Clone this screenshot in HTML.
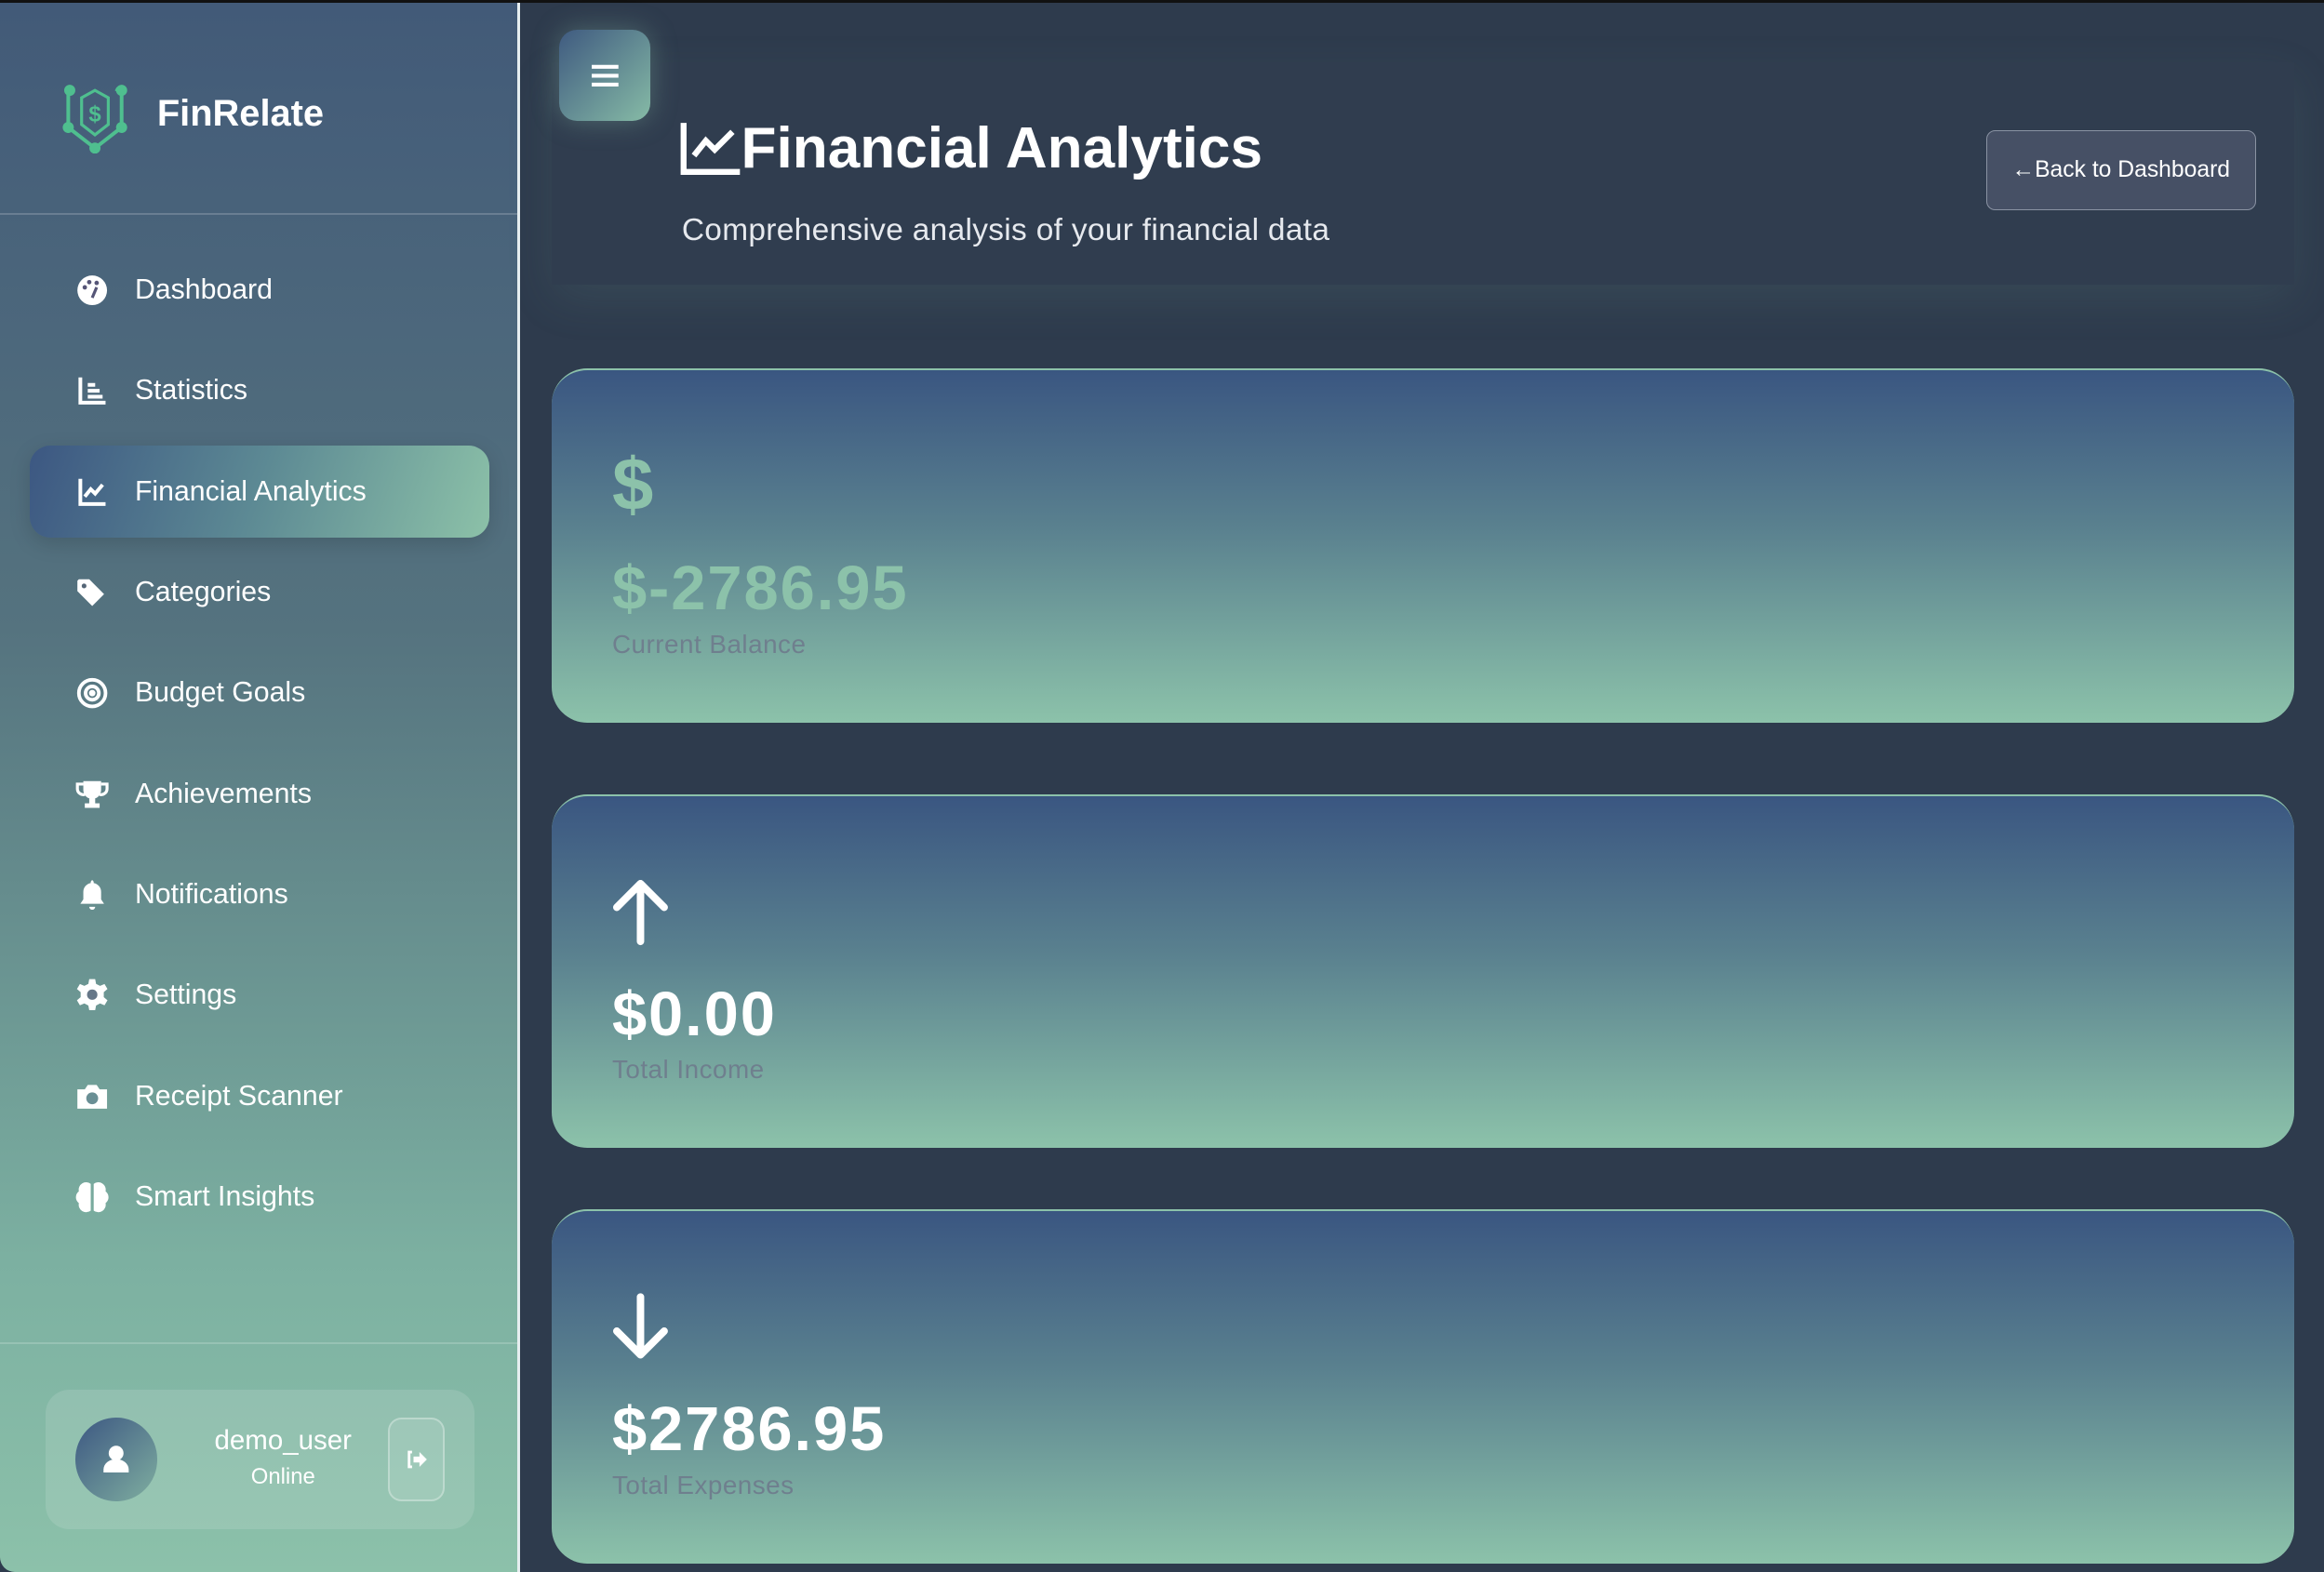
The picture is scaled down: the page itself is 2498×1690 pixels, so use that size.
<!DOCTYPE html>
<html><head><meta charset="utf-8"><style>
*{box-sizing:border-box;margin:0;padding:0}
html,body{width:2498px;height:1690px;overflow:hidden;background:#2d3a4c}
#w{zoom:1.5931;width:1568px;height:1061px;position:relative;font-family:"Liberation Sans",sans-serif;background:#2e3b4d;border-top:2px solid #111}
#sb{position:absolute;left:0;top:0;width:351px;height:1059px;background:linear-gradient(180deg,#425a78 0%,#55737f 40%,#7cb0a1 80%,#8cc1aa 100%);border-right:2px solid #e6eef0;border-bottom-left-radius:10px}
.logo{position:absolute;left:42px;top:52px}
.brand{position:absolute;left:106px;top:61px;color:#fff;font-size:25px;font-weight:bold}
.sep{position:absolute;left:0;width:349px;height:1px;background:rgba(255,255,255,.18)}
.ni{position:absolute;left:50px;color:#fff;font-size:19px;display:flex;align-items:center;height:30px}
.ni svg{width:24px;height:24px;margin-right:17px}
.act{position:absolute;left:20px;top:299px;width:310px;height:62px;border-radius:14px;background:linear-gradient(110deg,#3c5782 0%,#5d8a94 50%,#8cc1a8 100%);box-shadow:0 4px 14px rgba(0,0,0,.15)}
.user{position:absolute;left:31px;top:936px;width:289px;height:94px;border-radius:16px;background:rgba(255,255,255,.12)}
.av{position:absolute;left:20px;top:19px;width:55px;height:56px;border-radius:50%;background:linear-gradient(135deg,#3c5782,#7faea0)}
.hdr{position:absolute;left:372px;top:40px;width:1176px;height:150px;background:#303d4f;box-shadow:0 10px 30px rgba(120,170,160,.12)}
.ham{position:absolute;left:377px;top:18px;width:62px;height:62px;border-radius:12px;background:linear-gradient(135deg,#3f5a80,#86bba6);box-shadow:0 0 18px rgba(140,193,170,.35)}
.title{position:absolute;left:458px;top:76px;color:#fff;font-size:39px;font-weight:bold;display:flex;align-items:center}
.sub{position:absolute;left:460px;top:142px;color:#e6e9ee;font-size:21px;letter-spacing:.2px}
.back{position:absolute;left:1340px;top:86px;width:182px;height:54px;border:1px solid #8a93a3;border-radius:6px;background:#465065;color:#fff;font-size:15.5px;display:flex;align-items:center;justify-content:center}
.card{position:absolute;left:372px;width:1176px;height:239px;border-radius:24px;background:linear-gradient(180deg,#3a5681 0%,#5a818f 45%,#8cc2aa 100%);border-top:1.5px solid #8cc2aa}
.card .big{position:absolute;left:41px;font-size:42px;font-weight:bold;letter-spacing:1.2px}
.card .lbl{position:absolute;left:41px;font-size:17.5px;color:#6f7f8e;letter-spacing:.3px}
</style></head><body><div id="w">
<div id="sb">
<svg class="logo" width="46" height="50" viewBox="0 0 46 50" fill="none" stroke="#4fbf8f" stroke-width="2.5"><path d="M8 6 L4 8 V32 L22 46 L40 32 V8 L36 6"/><path d="M13 12 V30 L22 37 L31 30 V12 L22 7 Z" stroke-width="2"/><text x="22" y="28" fill="#4fbf8f" stroke="none" font-size="15" font-weight="bold" text-anchor="middle" font-family="Liberation Sans">$</text><circle cx="5" cy="7" r="2.5" fill="#4fbf8f"/><circle cx="40" cy="7" r="2.5" fill="#4fbf8f"/><circle cx="4" cy="32" r="2.5" fill="#4fbf8f"/><circle cx="40" cy="32" r="2.5" fill="#4fbf8f"/><circle cx="22" cy="46" r="2.5" fill="#4fbf8f"/></svg>
<div class="brand">FinRelate</div>
<div class="sep" style="top:142px"></div>
<div class="act"></div>
<div class="ni" style="top:179px"><svg viewBox="0 0 24 24"><circle cx="12" cy="12" r="10" fill="#fff"/><circle cx="7" cy="10" r="1.5" fill="#557"/><circle cx="10" cy="6.5" r="1.5" fill="#557"/><circle cx="15" cy="7" r="1.5" fill="#557"/><path d="M12 17 L15 10" stroke="#557" stroke-width="2"/></svg>Dashboard</div>
<div class="ni" style="top:247px"><svg viewBox="0 0 24 24" fill="none" stroke="#fff" stroke-width="2.5"><path d="M4 3V20H21M9 8H14M9 12H17M9 16H19"/></svg>Statistics</div>
<div class="ni" style="top:315px"><svg viewBox="0 0 24 24" fill="none" stroke="#fff" stroke-width="2.5"><path d="M4 3V20H21M7 15L11 10L14 13L19 7"/></svg>Financial Analytics</div>
<div class="ni" style="top:383px"><svg viewBox="0 0 24 24"><path d="M2 4V11L12 21L20 13L10 3H3Z" fill="#fff"/><circle cx="6.5" cy="7.5" r="1.6" fill="#567"/></svg>Categories</div>
<div class="ni" style="top:451px"><svg viewBox="0 0 24 24" fill="none" stroke="#fff" stroke-width="2.4"><circle cx="12" cy="12" r="9"/><circle cx="12" cy="12" r="4.5"/><circle cx="12" cy="12" r="1" fill="#fff"/></svg>Budget Goals</div>
<div class="ni" style="top:519px"><svg viewBox="0 0 24 24"><path d="M6 3H18V9A6 6 0 0 1 6 9Z M10 14H14V18H17V21H7V18H10Z" fill="#fff"/><path d="M6 5H2V8A4 4 0 0 0 7 12M18 5H22V8A4 4 0 0 1 17 12" stroke="#fff" stroke-width="2" fill="none"/></svg>Achievements</div>
<div class="ni" style="top:587px"><svg viewBox="0 0 24 24"><path d="M12 2A2 2 0 0 1 13 4A6 6 0 0 1 18 10V15L20 18H4L6 15V10A6 6 0 0 1 11 4A2 2 0 0 1 12 2ZM10 20H14A2 2 0 0 1 10 20Z" fill="#fff"/></svg>Notifications</div>
<div class="ni" style="top:655px"><svg viewBox="0 0 24 24"><path d="M10 1H14L14.6 4.2L17.3 5.6L20.3 4.3L22.3 7.7L19.8 9.8V13.2L22.3 15.3L20.3 18.7L17.3 17.4L14.6 18.8L14 22H10L9.4 18.8L6.7 17.4L3.7 18.7L1.7 15.3L4.2 13.2V9.8L1.7 7.7L3.7 4.3L6.7 5.6L9.4 4.2Z" fill="#fff"/><circle cx="12" cy="11.5" r="3.5" fill="#678"/></svg>Settings</div>
<div class="ni" style="top:723px"><svg viewBox="0 0 24 24"><path d="M2 7H7L9 4H15L17 7H22V20H2Z" fill="#fff"/><circle cx="12" cy="13" r="4" fill="#6a8f95"/></svg>Receipt Scanner</div>
<div class="ni" style="top:791px"><svg viewBox="0 0 24 24"><path d="M11 3A5 5 0 0 0 3 8A5 5 0 0 0 3 16A5 5 0 0 0 11 21ZM13 3A5 5 0 0 1 21 8A5 5 0 0 1 21 16A5 5 0 0 1 13 21Z" fill="#fff"/></svg>Smart Insights</div>
<div class="sep" style="top:904px"></div>
<div class="user"><div class="av"><svg width="55" height="56" viewBox="0 0 55 56"><circle cx="27.5" cy="24" r="5" fill="#fff"/><path d="M19 35A8.5 7 0 0 1 36 35V37H19Z" fill="#fff"/></svg></div>
<div style="position:absolute;left:100px;top:24px;width:120px;text-align:center;color:#fff;font-size:18.5px">demo_user</div>
<div style="position:absolute;left:110px;top:50px;width:100px;text-align:center;color:#fff;font-size:15px">Online</div>
<div style="position:absolute;left:231px;top:19px;width:38px;height:56px;border-radius:9px;border:1.5px solid rgba(255,255,255,.3);background:rgba(255,255,255,.1)"><svg width="38" height="56" viewBox="0 0 38 56"><path d="M15 22H13V32H15" stroke="#fff" stroke-width="1.8" fill="none"/><path d="M16 25H20V22L25 27L20 32V29H16Z" fill="#fff"/></svg></div></div>
</div>
<div class="hdr"></div>
<div class="ham"><svg width="62" height="62"><path d="M22 25H40M22 31H40M22 37H40" stroke="#fff" stroke-width="2.6"/></svg></div>
<div class="title"><svg width="42" height="38" viewBox="0 0 42 38" fill="none" stroke="#fff" stroke-width="4"><path d="M3 2V35H41M10 24L18 14L24 20L36 8"/></svg>Financial Analytics</div>
<div class="sub">Comprehensive analysis of your financial data</div>
<div class="back">&#8592;Back to Dashboard</div>
<div class="card" style="top:247px"><div class="big" style="top:48px;color:#8cc2aa;font-size:50px">$</div><div class="big" style="top:123px;color:#8cc2aa">$-2786.95</div><div class="lbl" style="top:175px">Current Balance</div></div>
<div class="card" style="top:534px"><svg style="position:absolute;left:39px;top:54px" width="42" height="48" viewBox="0 0 42 48" fill="none" stroke="#fff" stroke-width="5" stroke-linecap="round" stroke-linejoin="round"><path d="M21 44V5M5 21L21 5L37 21"/></svg><div class="big" style="top:123px;color:#fff">$0.00</div><div class="lbl" style="top:175px">Total Income</div></div>
<div class="card" style="top:814px"><svg style="position:absolute;left:39px;top:54px" width="42" height="48" viewBox="0 0 42 48" fill="none" stroke="#fff" stroke-width="5" stroke-linecap="round" stroke-linejoin="round"><path d="M21 4V43M5 27L21 43L37 27"/></svg><div class="big" style="top:123px;color:#fff">$2786.95</div><div class="lbl" style="top:175px">Total Expenses</div></div>
</div></body></html>
